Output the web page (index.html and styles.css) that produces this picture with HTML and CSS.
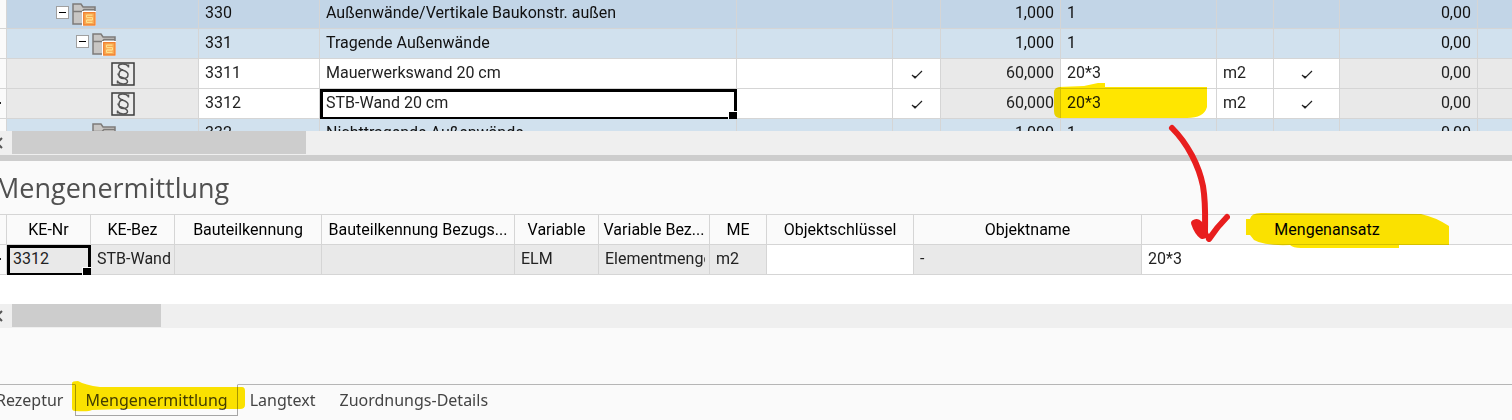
FILE: index.html
```html
<!DOCTYPE html>
<html lang="de">
<head>
<meta charset="utf-8">
<title>Mengenermittlung</title>
<link rel="stylesheet" href="styles.css">
</head>
<body>
<svg class="defs" aria-hidden="true">
  <symbol id="folder" viewBox="0 0 24 22">
    <path d="M1 1h8l2 3h12v17H1z" fill="#c8c6c4" stroke="#7d7b79" stroke-width="1.500"/>
    <path d="M1 8.500h9l2-2h11" fill="none" stroke="#7d7b79" stroke-width="1.500"/>
  </symbol>
  <symbol id="badge" viewBox="0 0 14 15">
    <path d="M0 0h14v15H0z" fill="#fff"/>
    <path d="M1.700 1.700h11.300v12.300H1.700z" fill="#f9a850" stroke="#f08232" stroke-width="1.300"/>
    <path d="M4.500 4.200h6M4.500 6.600h6M4.500 9h6M4.500 11.400h6" fill="none" stroke="#ffe08c" stroke-width="1.300"/>
    <path d="M4.500 4v2.500M10.500 6.500V9M4.500 9v2.500" fill="none" stroke="#ffe08c" stroke-width="1"/>
  </symbol>
  <symbol id="para" viewBox="0 0 24 24">
    <path d="M1 1h22v22H1z" fill="#ededed" stroke="#3c3c3c" stroke-width="1.500"/>
    <path d="M17.500 2.500v3M17.500 4.500C15 1 7.500 1.500 7.500 4.500c0 4.500 9.500 3 9.500 8 0 2.500-2 4-4.500 4S8 15 8 12.500 9.500 8 12 8M6.500 21.500v-3M6.500 19.500c2.500 3.500 10 3 10 0 0-4.500-9.500-3-9.500-8" fill="none" stroke="#555" stroke-width="1.500"/>
  </symbol>
  <symbol id="check" viewBox="0 0 12 10">
    <path d="M1 5l3 3 7-7" fill="none" stroke="#222" stroke-width="1.200"/>
    <path d="M2 5.500l2 3 2-2z" fill="#222"/>
  </symbol>
  <symbol id="left" viewBox="0 0 8 12">
    <path d="M7 1L2 6l5 5" fill="none" stroke="#555" stroke-width="2"/>
  </symbol>
</svg>
<main class="window">
  <section class="structure">
    <table class="grid">
      <colgroup>
        <col class="w-gutter"><col class="w-tree"><col class="w-nr"><col class="w-text"><col class="w-long"><col class="w-check"><col class="w-amount"><col class="w-long"><col class="w-unit"><col class="w-flag"><col class="w-price"><col>
      </colgroup>
      <tbody>
        <tr class="level-1">
          <td></td>
          <td><div class="tree depth-1"><button class="toggle" aria-label="Einklappen"></button><span class="folder"><svg><use href="#folder"/></svg><svg class="badge"><use href="#badge"/></svg></span></div></td>
          <td>330</td><td>Außenwände/Vertikale Baukonstr. außen</td><td></td><td></td><td class="num">1,000</td><td>1</td><td></td><td></td><td class="num">0,00</td><td></td>
        </tr>
        <tr class="level-2">
          <td></td>
          <td><div class="tree depth-2"><button class="toggle" aria-label="Einklappen"></button><span class="folder"><svg><use href="#folder"/></svg><svg class="badge"><use href="#badge"/></svg></span></div></td>
          <td>331</td><td>Tragende Außenwände</td><td></td><td></td><td class="num">1,000</td><td>1</td><td></td><td></td><td class="num">0,00</td><td></td>
        </tr>
        <tr>
          <td></td>
          <td class="locked"><div class="tree depth-3"><svg class="para"><use href="#para"/></svg></div></td>
          <td>3311</td><td>Mauerwerkswand 20 cm</td><td></td>
          <td class="mid"><svg class="check"><use href="#check"/></svg></td>
          <td class="num locked">60,000</td><td>20*3</td><td>m2</td>
          <td class="mid"><svg class="check"><use href="#check"/></svg></td>
          <td class="num locked">0,00</td><td class="locked"></td>
        </tr>
        <tr>
          <td class="current"></td>
          <td class="locked"><div class="tree depth-3"><svg class="para"><use href="#para"/></svg></div></td>
          <td>3312</td><td class="selected">STB-Wand 20 cm</td><td></td>
          <td class="mid"><svg class="check"><use href="#check"/></svg></td>
          <td class="num locked">60,000</td>
          <td class="marked">20*3<svg class="marker marker-amount" viewBox="0 0 154 37"><path d="M0 9q0-4 5-5l25-1 14-3h7v4h102v20q-3 11-20 11H5q-5-1-5-7z"/></svg></td>
          <td>m2</td>
          <td class="mid"><svg class="check"><use href="#check"/></svg></td>
          <td class="num locked">0,00</td><td class="locked"></td>
        </tr>
        <tr class="level-2">
          <td></td>
          <td><div class="tree depth-leaf"><span class="folder"><svg><use href="#folder"/></svg></span></div></td>
          <td>332</td><td>Nichttragende Außenwände</td><td></td><td></td><td class="num">1,000</td><td>1</td><td></td><td></td><td class="num">0,00</td><td></td>
        </tr>
      </tbody>
    </table>
  </section>
  <div class="scrollbar"><button class="step" aria-label="Nach links"><svg><use href="#left"/></svg></button><div class="thumb thumb-wide"></div></div>
  <div class="splitter"></div>
  <section class="quantities">
    <h1>Mengenermittlung</h1>
    <div class="sheet">
      <table class="grid">
        <colgroup>
          <col class="w-gutter"><col class="w-short"><col class="w-short"><col class="w-id"><col class="w-ref"><col class="w-short"><col class="w-var"><col class="w-unit"><col class="w-id"><col class="w-object"><col>
        </colgroup>
        <thead>
          <tr><th></th><th>KE-Nr</th><th>KE-Bez</th><th>Bauteilkennung</th><th>Bauteilkennung Bezugs...</th><th>Variable</th><th>Variable Bez...</th><th>ME</th><th>Objektschlüssel</th><th>Objektname</th>
          <th class="marked">Mengenansatz<svg class="marker marker-head" viewBox="0 0 204 36"><path d="M0 6h4q1-6 11-6l160 1q14 3 28 12v19h-50v3H55q-8 0-11-3-26 1-36-5l-4-5H0z"/></svg></th></tr>
        </thead>
        <tbody>
          <tr>
            <td class="current"></td><td class="locked selected">3312</td><td class="locked"><div class="clip">STB-Wand</div></td><td class="locked"></td><td class="locked"></td><td class="locked">ELM</td><td class="locked"><div class="clip">Elementmenge</div></td><td class="locked">m2</td><td></td><td class="locked">-</td><td>20*3</td>
          </tr>
        </tbody>
      </table>
    </div>
    <div class="scrollbar"><button class="step" aria-label="Nach links"><svg><use href="#left"/></svg></button><div class="thumb thumb-narrow"></div></div>
  </section>
  <nav class="tabs">
    <button>Rezeptur</button>
    <button class="active">Mengenermittlung<svg class="marker marker-tab" viewBox="0 0 173 31"><path d="M0 2q0-2 6-2 7 4 22 6h142q3 0 3 4v14q0 4-5 4H50l-30 1q-3 2-17 1-3 0-3-3z"/></svg></button>
    <button>Langtext</button>
    <button>Zuordnungs-Details</button>
  </nav>
  <svg class="arrow" viewBox="0 0 64 120" aria-hidden="true"><path d="M7 6c16 16 27 38 31 58 3 18 2 34 2 46"/><path d="M29 101q4-3 8 4l4 8-4 1q-5-4-8-13zM44 117q8-12 18-22"/></svg>
</main>
</body>
</html>
```
FILE: styles.css
```css
* { box-sizing: border-box; }

body {
  margin: 0;
  background: #fafafa;
  overflow: hidden;
  font-family: Roboto, "Liberation Sans", sans-serif;
  font-size: 16px;
  color: #222;
}

button {
  margin: 0;
  padding: 0;
  border: 0;
  background: none;
  font: inherit;
  color: inherit;
}

svg { display: block; }
.defs { display: none; }

/* The left edge of the window lies outside the viewport. */
.window {
  position: relative;
  margin-left: -16px;
}

.structure {
  height: 131px;
  overflow: hidden;
}

.grid {
  width: 100%;
  table-layout: fixed;
  border-collapse: separate;
  border-spacing: 0;
}

.w-gutter { width: 23px; }
.w-tree { width: 192px; }
.w-nr { width: 121px; }
.w-text { width: 417px; }
.w-long { width: 156px; }
.w-check { width: 48px; }
.w-amount { width: 120px; }
.w-unit { width: 57px; }
.w-flag { width: 66px; }
.w-price { width: 138px; }
.w-short { width: 84px; }
.w-id { width: 147px; }
.w-ref { width: 193px; }
.w-var { width: 111px; }
.w-object { width: 228px; }

.grid th,
.grid td {
  height: 30px;
  padding: 0 6px 2px;
  border-right: 1px solid #d5d5d5;
  border-bottom: 1px solid #d5d5d5;
  background: #fff;
  line-height: 20px;
  text-align: left;
  vertical-align: middle;
  white-space: nowrap;
}

.grid th {
  padding: 0;
  background: #fafafa;
  color: #000;
  font-weight: 400;
  text-align: center;
}

.grid th:last-child,
.grid td:last-child { border-right: 0; }

.structure tr:first-child td { height: 29px; }
.grid tr td:first-child { background: #fafafa; }
.grid tr.level-1 td:not(:first-child) { background: #c2d5e7; color: #111; }
.grid tr.level-2 td:not(:first-child) { background: #d1e1ee; color: #111; }
.grid td.locked { background: #e9e9e9; }
.grid td.num { text-align: right; }
.grid td:has(.clip) { padding-right: 4px; }
.clip { overflow: hidden; }

.grid td.current::before {
  content: "";
  display: block;
  width: 11px;
  height: 2px;
  background: #222;
}

.mid svg { margin: 4px auto 0; }
.check { width: 12px; height: 10px; }

.tree {
  display: flex;
  align-items: center;
  gap: 3px;
  height: 24px;
}
.grid td:has(.tree) { padding-bottom: 0; }

.depth-1 { padding-left: 43px; }
.depth-2 { padding-left: 63px; }
.depth-3 { padding-left: 98px; }
.depth-leaf { padding-left: 79px; }

.toggle {
  width: 13px;
  height: 13px;
  margin-bottom: 4px;
  border: 1px solid #a0a0a0;
  background: linear-gradient(#000, #000) center / 7px 1px no-repeat #fff;
}

.folder { position: relative; }
.folder svg { width: 24px; height: 22px; }
.folder .badge {
  position: absolute;
  right: 0;
  bottom: -1px;
  width: 14px;
  height: 15px;
}

.para { width: 24px; height: 24px; }

.selected { position: relative; }
.selected::before {
  content: "";
  position: absolute;
  inset: 0 -1px -1px 0;
  border: 3px solid #000;
  border-bottom-width: 2px;
}
.selected::after {
  content: "";
  position: absolute;
  right: -1px;
  bottom: -1px;
  width: 8px;
  height: 7px;
  border: solid #fff;
  border-width: 1px 0 0 1px;
  background: #000;
}

.scrollbar {
  display: flex;
  height: 24px;
  background: #efefef;
}
.step {
  display: flex;
  align-items: center;
  justify-content: flex-end;
  width: 28px;
  padding-right: 9px;
}
.step svg { width: 8px; height: 12px; }
.thumb { height: 23px; background: #cdcdcd; }
.thumb-wide { width: 294px; }
.thumb-narrow { width: 149px; }

.splitter { height: 6px; background: #cdcdcd; }

.quantities h1 {
  margin: 0;
  padding: 6px 0 6px 11px;
  border-bottom: 1px solid #d5d5d5;
  font-family: "Open Sans", "Noto Sans", sans-serif;
  font-size: 27px;
  font-weight: 400;
  line-height: 41px;
  color: #505050;
}

.sheet {
  padding-bottom: 29px;
  background: #fff;
}

.tabs {
  display: flex;
  align-items: flex-start;
  margin-top: 56px;
  border-top: 1px solid #b5b5b5;
  font-family: "Noto Sans", "Open Sans", sans-serif;
  font-size: 16px;
  line-height: 30px;
  color: #444;
}
.tabs button { padding: 0 12px; }
.tabs .active {
  position: relative;
  margin-top: -1px;
  padding: 0 9px;
  border: 1px solid #a5a5a5;
  border-top-color: #fafafa;
}

/* Highlighter strokes and arrow drawn over the content. */
.marked { position: relative; }
.marker {
  position: absolute;
  fill: #ffe600;
  mix-blend-mode: multiply;
  pointer-events: none;
}
.marker-amount { left: -7px; top: -6px; width: 154px; height: 37px; }
.marker-head { left: 104px; top: -2px; width: 204px; height: 36px; }
.marker-tab { left: -4px; top: -4px; width: 173px; height: 31px; }

.arrow {
  position: absolute;
  left: 1181px;
  top: 122px;
  width: 64px;
  height: 120px;
  overflow: visible;
  fill: none;
  stroke: #e81e1e;
  stroke-width: 6;
  stroke-linecap: round;
  stroke-linejoin: round;
}
```
